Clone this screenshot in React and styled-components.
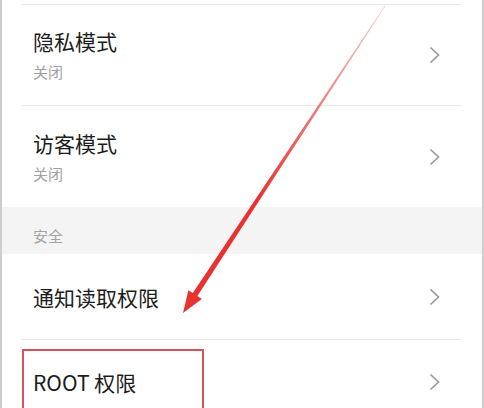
import React from "react";
import styled, { createGlobalStyle } from "styled-components";

const Global = createGlobalStyle`
  html, body { margin: 0; padding: 0; background: #fff; }
  body { font-family: "Noto Sans CJK SC", "Noto Sans", sans-serif; }
`;

const Frame = styled.div`
  position: relative;
  width: 484px;
  height: 408px;
  overflow: hidden;
  background: #fff;
`;

const Page = styled.div`
  box-sizing: border-box;
  width: 484px;
  height: 408px;
  border-left: 2px solid #cdcdcd;
  border-right: 2px solid #cdcdcd;
  padding-top: 4px;
  display: flex;
  flex-direction: column;
`;

const Row = styled.div`
  position: relative;
  box-sizing: border-box;
  margin: 0 20px;
  height: ${(p) => p.$h}px;
  flex-shrink: 0;
  border-top: ${(p) => (p.$divider ? "1px solid #e9e9e9" : "none")};
  padding: 0 22px 0 11px;
  display: flex;
  align-items: center;
  justify-content: space-between;
`;

const Texts = styled.div`
  display: flex;
  flex-direction: column;
`;

const Title = styled.div`
  font-size: 21px;
  line-height: 26px;
  color: #1c1c1c;
`;

const Sub = styled.div`
  margin-top: 8px;
  font-size: 15px;
  line-height: 20px;
  color: #a0a0a0;
`;

const Section = styled.div`
  box-sizing: border-box;
  height: 47px;
  flex-shrink: 0;
  background: #f4f4f4;
  padding: 19px 0 0 31px;
  font-size: 15px;
  line-height: 20px;
  color: #a3a3a3;
`;

const Highlight = styled.div`
  position: absolute;
  left: 0;
  top: 9px;
  box-sizing: border-box;
  width: 182px;
  height: 80px;
  border: 2px solid #d4545c;
`;

const Overlay = styled.svg`
  position: absolute;
  left: 0;
  top: 0;
  pointer-events: none;
`;

const Chevron = () => (
  <svg width="11" height="18" viewBox="0 0 11 18">
    <polyline
      points="1.5,1.5 9.5,9 1.5,16.5"
      fill="none"
      stroke="#9a9a9a"
      strokeWidth="1.7"
      strokeLinejoin="miter"
    />
  </svg>
);

const Item = ({ title, sub, h, divider, children }) => (
  <Row $h={h} $divider={divider}>
    <Texts>
      <Title>{title}</Title>
      {sub && <Sub>{sub}</Sub>}
    </Texts>
    <Chevron />
    {children}
  </Row>
);

export default function App() {
  return (
    <>
      <Global />
      <Frame>
        <Page>
          <Item title="隐私模式" sub="关闭" h={101} divider />
          <Item title="访客模式" sub="关闭" h={102} divider />
          <Section>安全</Section>
          <Item title="通知读取权限" h={85} />
          <Item title="ROOT 权限" h={85} divider>
            <Highlight />
          </Item>
        </Page>
        <Overlay width="484" height="408" viewBox="0 0 484 408">
          <defs>
            <linearGradient id="arrowFade" gradientUnits="userSpaceOnUse" x1="385" y1="6" x2="260" y2="200">
              <stop offset="0" stopColor="#e8322f" stopOpacity="0.25" />
              <stop offset="1" stopColor="#e8322f" stopOpacity="1" />
            </linearGradient>
          </defs>
          <polygon
            points="183,313 201.8,299 197.4,296.1 385.3,6.2 384.7,5.8 192.8,293.1 188.4,290.2"
            fill="url(#arrowFade)"
          />
        </Overlay>
      </Frame>
    </>
  );
}
